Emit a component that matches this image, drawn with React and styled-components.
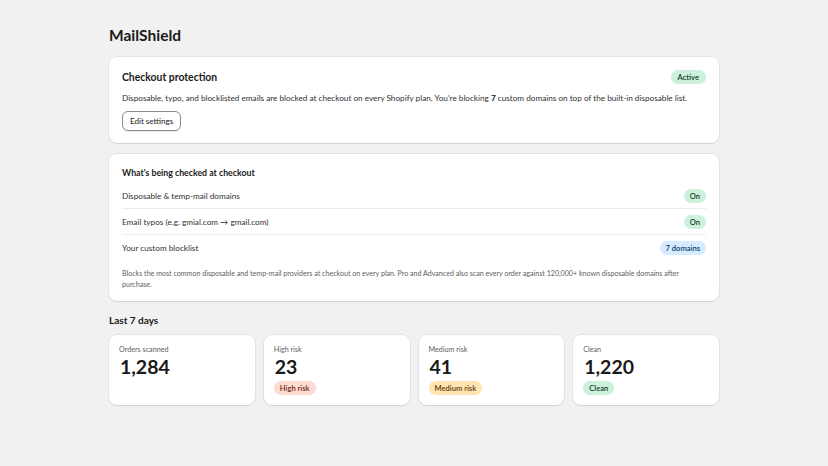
import React from "react";
import styled, { createGlobalStyle } from "styled-components";

const Global = createGlobalStyle`
  html, body { margin: 0; padding: 0; background: #f1f1f1; }
  body { font-family: Lato, "Noto Sans", sans-serif; color: #303030; -webkit-font-smoothing: antialiased; }
`;

const Page = styled.main`
  width: 610px;
  margin: 0 auto;
  padding: 24px 0 40px;
  display: flex;
  flex-direction: column;
`;

const PageTitle = styled.h1`
  margin: 0 0 11px;
  font-size: 15.5px;
  line-height: 22px;
  font-weight: 700;
  color: #1a1a1a;
`;

const Card = styled.section`
  background: #fff;
  border-radius: 8px;
  box-shadow: 0 0 0 1px rgba(0,0,0,0.05), 0 1px 1px rgba(0,0,0,0.08);
  padding: ${(p) => p.$pad || "12px 13px"};
  display: flex;
  flex-direction: column;
  margin-bottom: ${(p) => p.$mb || "0"};
`;

const HeaderRow = styled.div`
  display: flex;
  align-items: center;
  justify-content: space-between;
  height: 16px;
`;

const CardTitle = styled.h2`
  margin: 0;
  font-size: 10.4px;
  line-height: 16px;
  font-weight: 700;
  color: #1a1a1a;
`;

const SubTitle = styled.h3`
  margin: 0 0 3px;
  font-size: 8.75px;
  line-height: 14px;
  font-weight: 700;
  color: #1a1a1a;
`;

const Body = styled.p`
  margin: 6px 0 6px;
  font-size: 8.2px;
  line-height: 14px;
  color: #303030;
  white-space: nowrap;
  b { font-weight: 700; color: #1a1a1a; }
`;

const Button = styled.button`
  align-self: flex-start;
  height: 20px;
  padding: 0 7px;
  border: 1px solid #8a8a8a;
  border-radius: 6px;
  background: #fff;
  box-shadow: 0 1px 0 rgba(0,0,0,0.08);
  font-family: inherit;
  font-size: 8px;
  font-weight: 500;
  color: #303030;
  cursor: pointer;
`;

const tones = {
  green: { bg: "#cdf0dc", fg: "#0c3a23" },
  blue: { bg: "#d5ebff", fg: "#0b3a66" },
  red: { bg: "#fcdbd0", fg: "#6b2410" },
  orange: { bg: "#ffe3b0", fg: "#5e3b06" },
};

const Badge = styled.span`
  display: inline-flex;
  align-items: center;
  height: 14px;
  padding: 0 ${(p) => p.$px || 6}px;
  border-radius: 7px;
  font-size: 7.6px;
  font-weight: 600;
  background: ${(p) => tones[p.$tone].bg};
  color: ${(p) => tones[p.$tone].fg};
  white-space: nowrap;
`;

const Row = styled.div`
  display: flex;
  align-items: center;
  justify-content: space-between;
  height: 26px;
  border-bottom: ${(p) => (p.$last ? "none" : "1px solid #ebebeb")};
  box-sizing: border-box;
  font-size: 8.2px;
  color: #303030;
`;

const Footnote = styled.p`
  margin: 7px 0 0;
  font-size: 7.1px;
  line-height: 11px;
  color: #616161;
`;

const SectionTitle = styled.h2`
  margin: 11px 0 7px;
  font-size: 10px;
  line-height: 16px;
  font-weight: 700;
  color: #1a1a1a;
`;

const StatGrid = styled.div`
  display: grid;
  grid-template-columns: repeat(4, 1fr);
  gap: 9px;
`;

const StatCard = styled.div`
  background: #fff;
  border-radius: 8px;
  box-shadow: 0 0 0 1px rgba(0,0,0,0.05), 0 1px 1px rgba(0,0,0,0.08);
  height: 70px;
  box-sizing: border-box;
  padding: 9px 10px;
  display: flex;
  flex-direction: column;
  align-items: flex-start;
`;

const StatLabel = styled.div`
  font-size: 7.2px;
  line-height: 11px;
  color: #616161;
`;

const StatValue = styled.div`
  font-size: 19.5px;
  line-height: 24px;
  font-weight: 700;
  color: #1a1a1a;
  margin-left: 1px;
  margin-bottom: 2px;
`;

const stats = [
  { label: "Orders scanned", value: "1,284" },
  { label: "High risk", value: "23", badge: "High risk", tone: "red" },
  { label: "Medium risk", value: "41", badge: "Medium risk", tone: "orange" },
  { label: "Clean", value: "1,220", badge: "Clean", tone: "green" },
];

export default function App() {
  return (
    <>
      <Global />
      <Page>
        <PageTitle>MailShield</PageTitle>
        <Card $mb="11px">
          <HeaderRow>
            <CardTitle>Checkout protection</CardTitle>
            <Badge $tone="green" $px={7}>Active</Badge>
          </HeaderRow>
          <Body>
            Disposable, typo, and blocklisted emails are blocked at checkout on every Shopify plan. You're blocking <b>7</b> custom domains on top of the built-in disposable list.
          </Body>
          <Button>Edit settings</Button>
        </Card>
        <Card $pad="12px 13px 11px">
          <SubTitle>What's being checked at checkout</SubTitle>
          <Row>
            <span>Disposable &amp; temp-mail domains</span>
            <Badge $tone="green">On</Badge>
          </Row>
          <Row>
            <span>Email typos (e.g. gmial.com → gmail.com)</span>
            <Badge $tone="green">On</Badge>
          </Row>
          <Row $last>
            <span>Your custom blocklist</span>
            <Badge $tone="blue">7 domains</Badge>
          </Row>
          <Footnote>
            Blocks the most common disposable and temp-mail providers at checkout on every plan. Pro and Advanced also scan every order against 120,000+ known disposable domains after purchase.
          </Footnote>
        </Card>
        <SectionTitle>Last 7 days</SectionTitle>
        <StatGrid>
          {stats.map((s) => (
            <StatCard key={s.label}>
              <StatLabel>{s.label}</StatLabel>
              <StatValue>{s.value}</StatValue>
              {s.badge && <Badge $tone={s.tone}>{s.badge}</Badge>}
            </StatCard>
          ))}
        </StatGrid>
      </Page>
    </>
  );
}
